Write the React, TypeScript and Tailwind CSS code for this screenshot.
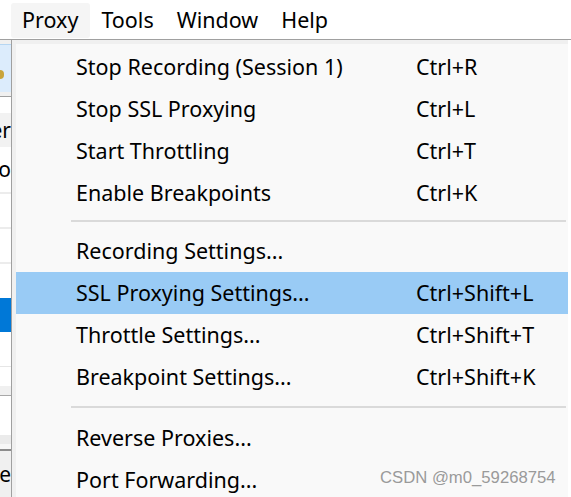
const MENUS = ['Proxy', 'Tools', 'Window', 'Help'];

type Entry = { label: string; keys: string } | { sep: number };

const ENTRIES: Entry[] = [
  { label: 'Stop Recording (Session 1)', keys: 'Ctrl+R' },
  { label: 'Stop SSL Proxying', keys: 'Ctrl+L' },
  { label: 'Start Throttling', keys: 'Ctrl+T' },
  { label: 'Enable Breakpoints', keys: 'Ctrl+K' },
  { sep: 1 },
  { label: 'Recording Settings...', keys: '' },
  { label: 'SSL Proxying Settings...', keys: 'Ctrl+Shift+L' },
  { label: 'Throttle Settings...', keys: 'Ctrl+Shift+T' },
  { label: 'Breakpoint Settings...', keys: 'Ctrl+Shift+K' },
  { sep: 2 },
  { label: 'Reverse Proxies...', keys: '' },
  { label: 'Port Forwarding...', keys: '' },
];

const ACTIVE = 'SSL Proxying Settings...';

// the window behind the menu, only an 11px sliver of it shows
function BackStrip() {
  return (
    <div className="w-[11px] shrink-0 flex flex-col overflow-hidden">
      <div className="h-[4px] bg-[#f0f0f0]" />
      <div className="h-[48px] bg-[#dcecfc] border-t border-[#b6d6f2] relative">
        <div className="absolute left-0 top-[25px] w-[4px] h-[9px] rounded-r-full bg-[#c9a43a]" />
      </div>
      <div className="h-[5px] bg-[#f0f0f0] border-b border-[#a0a0a0]" />
      <div className="h-[16px] bg-white" />
      <div className="h-[34px] bg-[#f2f2f2] flex justify-end items-center overflow-hidden">
        <span className="text-[21px] leading-none text-black whitespace-nowrap">er</span>
      </div>
      <div className="h-[45px] bg-white flex justify-end items-center overflow-hidden">
        <span className="text-[21px] leading-none text-black whitespace-nowrap">o</span>
      </div>
      <div className="h-[35px] bg-white border-t-2 border-[#ececec]" />
      <div className="h-[35px] bg-white border-t-2 border-[#ececec]" />
      <div className="h-[36px] bg-white border-t-2 border-[#ececec]" />
      <div className="h-[34px] bg-[#0078d7]" />
      <div className="h-[35px] bg-white border-b border-[#e6e6e6]" />
      <div className="h-[19px] bg-white" />
      <div className="h-[10px] bg-[#f0f0f0] border-b border-[#a8a8a8]" />
      <div className="h-[39px] bg-white" />
      <div className="h-[9px] bg-[#ebebeb]" />
      <div className="h-[7px] bg-[#f7f7f7] border-b-2 border-[#8c8c8c]" />
      <div className="flex-1 bg-[#f0f0f0] flex justify-end items-center overflow-hidden">
        <span className="text-[21px] leading-none text-black whitespace-nowrap">e</span>
      </div>
    </div>
  );
}

export default function App() {
  return (
    <div
      className="relative w-[571px] h-[497px] overflow-hidden bg-white flex flex-col text-black"
      style={{ fontFamily: '"Noto Sans", "Open Sans", sans-serif' }}
    >
      <div className="h-[40px] shrink-0 flex items-start pl-[11px] border-b border-[#a0a0a0]">
        {MENUS.map((m) => (
          <div
            key={m}
            className={`mt-[3px] h-[35px] pl-[11px] pr-[12px] flex items-center text-[21.5px] rounded-[3px] ${
              m === 'Proxy' ? 'bg-[#f5f5f5]' : ''
            }`}
          >
            {m}
          </div>
        ))}
      </div>

      <div className="flex-1 flex min-h-0">
        <BackStrip />
        <div className="flex-1 mr-[3px] border-l border-[#a0a0a0] bg-[#f0f0f0] pl-[4px] pt-[4px] flex">
          <div className="flex-1 bg-[#f9f9f9] pt-[2px] flex flex-col">
            {ENTRIES.map((e, i) =>
              'sep' in e ? (
                <div
                  key={i}
                  className={`shrink-0 pl-[55px] pr-[2px] ${
                    e.sep === 1 ? 'h-[16px] pt-[6px]' : 'h-[19px] pt-[8px]'
                  }`}
                >
                  <div className="h-[2px] bg-[#dadada]" />
                </div>
              ) : (
                <div
                  key={i}
                  className={`h-[42px] shrink-0 flex items-center text-[21.5px] whitespace-nowrap ${
                    e.label === ACTIVE ? 'bg-[#99cbf5]' : ''
                  }`}
                >
                  <span className="pl-[60px] w-[400px]">{e.label}</span>
                  <span>{e.keys}</span>
                </div>
              )
            )}
          </div>
        </div>
      </div>

      <div
        className="absolute left-[380px] top-[470px] text-[16.7px] leading-none text-[#9a9a9a]"
        style={{ fontFamily: '"Liberation Sans", Arial, sans-serif' }}
      >
        CSDN @m0_59268754
      </div>
    </div>
  );
}
